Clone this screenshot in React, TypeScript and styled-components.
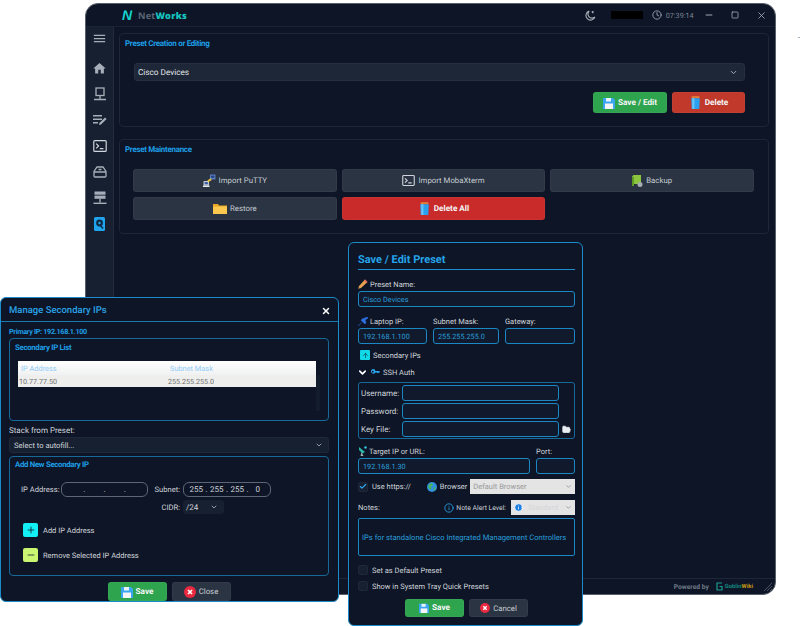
import React from 'react';
import styled, { createGlobalStyle, css } from 'styled-components';
import { MdHome, MdMenu } from 'react-icons/md';
import { ArrowUp, ChevronDown, Clock, Minus, Square, X, Info, Check, Plus, FolderOpen } from 'lucide-react';

const GlobalStyle = createGlobalStyle`
  html, body { margin: 0; padding: 0; background: #fff; overflow: hidden; }
  * { box-sizing: border-box; }
  body { font-family: Roboto, "Noto Sans", sans-serif; text-rendering: geometricPrecision; }
`;

const navy = '#0d1526';
const blue = '#1e9fe6';
const inputBorder = '#1b88c4';
const label = '#d0d4da';
const fieldText = '#2a9fdc';

const Desktop = styled('div')`
  position: relative;
  width: 800px;
  height: 626px;
  overflow: hidden;
`;

const StrayMark = styled('div')`
  position: absolute;
  left: 798px;
  top: 37px;
  width: 2px;
  height: 1px;
  background: #9fb4c0;
`;

// MAIN WINDOW
const MainWindow = styled('div')`
  position: absolute;
  left: 85px;
  top: 3px;
  width: 691px;
  height: 592px;
  display: flex;
  flex-direction: column;
  background: ${navy};
  border-radius: 13px;
  border: 1px solid #59606b;
  overflow: hidden;
`;

const TitleBar = styled('div')`
  height: 23px;
  flex: none;
  display: flex;
  align-items: center;
  padding-left: 36px;
  border-bottom: 1px solid #1a2333;
`;

const LogoN = styled('span')`
  font-family: "Liberation Sans", sans-serif;
  font-size: 14px;
  font-weight: 700;
  font-style: italic;
  color: #12d3cf;
  width: 16px;
`;

const AppName = styled('span')`
  font-family: "Noto Sans", sans-serif;
  font-size: 9.2px;
  font-weight: 700;
  color: #5b6676;
  letter-spacing: 0.2px;
  b { color: #15c5c0; }
`;

const TitleRight = styled('div')`
  margin-left: auto;
  display: flex;
  align-items: center;
  color: #a8afb9;
`;

const Redacted = styled('div')`
  width: 32px;
  height: 8px;
  background: #000;
  margin: 0 9px 0 15px;
`;

const Time = styled('span')`
  font-size: 7.2px;
  color: #7f8896;
  margin: 0 2px 0 4px;
`;

const WinControl = styled('span')`
  width: 26.5px;
  display: flex;
  justify-content: center;
  color: #c0c6cf;
`;

const Body = styled('div')`
  flex: 1;
  display: flex;
  min-height: 0;
`;

const Sidebar = styled('div')`
  width: 28px;
  flex: none;
  background: #172030;
  border-right: 1px solid #222c3c;
  padding-top: 4px;
  display: flex;
  flex-direction: column;
  align-items: center;
  gap: 12px;
  color: #a6aeb9;
`;

const SideIcon = styled('span')<{ $first?: boolean }>`
  height: 14px;
  width: 16px;
  display: flex;
  align-items: center;
  justify-content: center;
  ${p => p.$first && css`margin-bottom: 4px;`}
`;

const Content = styled('div')`
  flex: 1;
  padding: 6px 6px 0 5px;
  display: flex;
  flex-direction: column;
  gap: 12px;
`;

const Panel = styled('section')<{ $h: number }>`
  height: ${p => p.$h}px;
  border: 1px solid #1d2738;
  border-radius: 4px;
  padding-top: 5px;
`;

const PanelTitle = styled('div')`
  font-size: 8px;
  line-height: 10px;
  font-weight: 700;
  letter-spacing: -0.3px;
  color: ${blue};
  padding-left: 5px;
`;

const PresetSelect = styled('div')`
  margin: 14px 23px 0 14px;
  height: 18px;
  background: #1d2737;
  border: 1px solid #252f40;
  border-radius: 3px;
  display: flex;
  align-items: center;
  justify-content: space-between;
  padding: 1px 6px 0 3px;
  font-size: 8.2px;
  color: #e3e6ea;
`;

const ActionRow = styled('div')`
  display: flex;
  justify-content: flex-end;
  gap: 5px;
  margin: 11px 23px 0 0;
`;

const tones = {
  green: '#2ea44f',
  red: '#c0392b',
  bright: '#c92a2a',
  grey: '#2b3442',
};

const Btn = styled('div')<{ $tone: keyof typeof tones; $w?: number; $h: number }>`
  ${p => p.$w ? css`width: ${p.$w}px;` : ''}
  height: ${p => p.$h}px;
  background: ${p => tones[p.$tone]};
  border-radius: 3px;
  display: flex;
  align-items: center;
  justify-content: center;
  gap: 3px;
  font-size: ${p => p.$tone === 'grey' ? 7.8 : 8.2}px;
  font-weight: ${p => p.$tone === 'grey' ? 400 : 700};
  color: ${p => p.$tone === 'grey' ? '#c6ccd3' : '#f4f6f7'};
  border: 1px solid rgba(255, 255, 255, 0.04);
`;

const MaintGrid = styled('div')`
  display: grid;
  grid-template-columns: repeat(3, 1fr);
  gap: 5px;
  margin: 14px 14px 0 13px;
`;

const Footer = styled('div')`
  height: 16px;
  flex: none;
  border-top: 1px solid #1d2738;
  display: flex;
  align-items: center;
  justify-content: flex-end;
  padding-right: 2px;
  font-size: 6.7px;
  font-weight: 700;
  color: #6f7a88;
  gap: 2px;
`;

const WikiName = styled('span')`
  font-size: 5.8px;
  color: #13877f;
  b { color: #b58a1a; }
`;

// DIALOGS
const Dialog = styled('div')<{ $x: number; $y: number; $w: number; $h: number }>`
  position: absolute;
  left: ${p => p.$x}px;
  top: ${p => p.$y}px;
  width: ${p => p.$w}px;
  height: ${p => p.$h}px;
  background: ${navy};
  border: 1px solid #1a8ccb;
  border-radius: 6px;
  display: flex;
  flex-direction: column;
`;

const DialogHeader = styled('div')`
  height: 24px;
  flex: none;
  border-bottom: 1px solid #1a7ab0;
  display: flex;
  align-items: center;
  justify-content: space-between;
  padding: 2px 7px 0 8px;
  font-size: 9.5px;
  font-weight: 500;
  color: #2aa3e6;
  svg { color: #fff; }
`;

const DialogBody = styled('div')`
  padding: 5px 9px 0 8px;
  flex: 1;
`;

const PrimaryIp = styled('div')`
  font-size: 7.2px;
  line-height: 10px;
  font-weight: 700;
  letter-spacing: -0.3px;
  color: ${blue};
  margin-bottom: 1px;
`;

const Group = styled('div')<{ $h: number; $pt: number }>`
  height: ${p => p.$h}px;
  border: 1px solid #17699a;
  border-radius: 4px;
  padding-top: ${p => p.$pt}px;
`;

const GroupTitle = styled('div')`
  font-size: 7.8px;
  line-height: 10px;
  font-weight: 700;
  letter-spacing: -0.3px;
  color: ${blue};
  padding-left: 5px;
`;

const TableWrap = styled('div')`
  margin: 8px 8px 0 8px;
  display: grid;
  grid-template-columns: 1fr 4px;
`;

const Table = styled('div')`
  height: 50px;
`;

const TableHead = styled('div')`
  height: 14px;
  background: linear-gradient(#ffffff, #f0f1f2);
  display: grid;
  grid-template-columns: 149px 1fr;
  align-items: center;
  padding-left: 3px;
  font-size: 7.4px;
  color: #93cdf6;
`;

const TableRow = styled('div')`
  height: 12px;
  background: #eeeeec;
  display: grid;
  grid-template-columns: 149px 1fr;
  align-items: center;
  padding-left: 1px;
  font-size: 7.2px;
  color: #6f6f6f;
`;

const ScrollTrack = styled('div')`
  margin-top: 14px;
  background: #131c2c;
`;

const StackLabel = styled('div')`
  font-size: 8px;
  line-height: 10px;
  color: ${label};
  margin-top: 5px;
  margin-bottom: 1px;
`;

const AutoSelect = styled('div')`
  height: 16px;
  background: #172030;
  border: 1px solid #1e2838;
  border-radius: 3px;
  display: flex;
  align-items: center;
  justify-content: space-between;
  padding: 0 5px 0 4px;
  font-size: 7.6px;
  color: ${label};
  margin-bottom: 3px;
`;

const IpGrid = styled('div')`
  display: grid;
  grid-template-columns: 40px 87px 35px 88px;
  grid-template-rows: 15px 14px;
  row-gap: 3px;
  margin: 12px 0 0 11px;
  align-items: center;
`;

const GridLabel = styled('span')`
  font-size: 7.6px;
  color: ${label};
  text-align: right;
  padding-right: 3px;
  white-space: nowrap;
`;

const IpBox = styled('div')`
  height: 15px;
  border: 1px solid #5c6676;
  border-radius: 6px;
  display: grid;
  grid-template-columns: repeat(4, 1fr);
  align-items: center;
  padding: 0 2px;
  font-size: 8px;
  color: ${label};
  span { text-align: center; position: relative; min-height: 10px; }
  span + span::before { content: '.'; position: absolute; left: -1px; }
`;

const CidrSelect = styled('div')`
  width: 41px;
  height: 14px;
  background: #172030;
  border-radius: 3px;
  display: flex;
  align-items: center;
  justify-content: space-between;
  padding: 0 6px 0 3px;
  font-size: 8px;
  color: ${label};
`;

const ToolRow = styled('div')<{ $mt: number }>`
  display: flex;
  align-items: center;
  gap: 5px;
  margin: ${p => p.$mt}px 0 0 13px;
  font-size: 7.5px;
  color: ${label};
`;

const ToolSquare = styled('span')<{ $bg: string }>`
  width: 15px;
  height: 14px;
  background: ${p => p.$bg};
  border-radius: 2px;
  display: flex;
  align-items: center;
  justify-content: center;
  color: #123;
`;

const DialogButtons = styled('div')<{ $mt: number }>`
  display: flex;
  justify-content: center;
  gap: 5px;
  margin-top: ${p => p.$mt}px;
`;

// SAVE / EDIT FORM
const FormBody = styled('div')`
  padding: 9px 7px 0 9px;
`;

const FormTitle = styled('div')`
  font-size: 11px;
  line-height: 16px;
  height: 18px;
  font-weight: 700;
  color: #25a4ea;
  border-bottom: 1px solid #1d8fd0;
  margin-bottom: 9px;
`;

const FieldLabel = styled('div')`
  height: 10px;
  display: flex;
  align-items: center;
  gap: 2px;
  font-size: 7.5px;
  color: ${label};
  margin-bottom: 2px;
  white-space: nowrap;
`;

const Field = styled('div')`
  height: 16px;
  border: 1px solid ${inputBorder};
  border-radius: 3px;
  background: #111a2c;
  display: flex;
  align-items: center;
  padding-left: 4px;
  font-size: 7.3px;
  color: ${fieldText};
`;

const Columns = styled('div')<{ $cols: string; $mt: number }>`
  display: grid;
  grid-template-columns: ${p => p.$cols};
  column-gap: 6px;
  margin-top: ${p => p.$mt}px;
`;

const InlineRow = styled('div')<{ $mt: number; $h?: number }>`
  display: flex;
  align-items: center;
  gap: 3px;
  margin-top: ${p => p.$mt}px;
  height: ${p => p.$h ?? 12}px;
  font-size: 7.5px;
  color: ${label};
`;

const CyanTile = styled('span')`
  width: 10px;
  height: 10px;
  margin: 0 0 0 2px;
  background: #10d8e6;
  border-radius: 1px;
  display: flex;
  align-items: center;
  justify-content: center;
  color: #123;
`;

const SshChevron = styled('span')`
  display: flex;
  margin-left: -1px;
`;

const SshGroup = styled('div')`
  margin-top: 4px;
  height: 57px;
  border: 1px solid #17699a;
  border-radius: 3px;
  padding: 2px 0 0 2px;
  display: grid;
  grid-template-columns: 41px 157px 1fr;
  grid-auto-rows: 16px;
  row-gap: 2px;
  align-items: center;
  font-size: 8px;
  color: ${label};
`;

const KeyFolder = styled(FolderOpen)`
  margin-left: 3px;
  fill: #e8edf2;
  color: #e8edf2;
`;

const CheckBox = styled('span')`
  width: 10px;
  height: 10px;
  margin-right: 1px;
  border-radius: 2px;
  background: #172030;
  border: 1px solid #1e2838;
  display: flex;
  align-items: center;
  justify-content: center;
  color: #2ba7ef;
`;

const NativeSelect = styled('div')<{ $w: number }>`
  width: ${p => p.$w}px;
  height: 15px;
  background: #e4e4e4;
  display: flex;
  align-items: center;
  gap: 5px;
  padding: 0 3px;
  font-size: 7.5px;
  color: #9a9a9a;
  svg:last-child { margin-left: auto; }
`;

const FaintOption = styled('span')`
  color: #d4d6d8;
`;

const Notes = styled('div')`
  margin-top: 3px;
  height: 38px;
  border: 1px solid ${inputBorder};
  border-radius: 2px;
  display: flex;
  align-items: center;
  padding-left: 3px;
  font-size: 7.6px;
  color: ${fieldText};
  white-space: nowrap;
`;

const HttpsLabel = styled('span')`
  width: 52px;
`;

const AlertLevel = styled('span')`
  margin-left: auto;
  display: flex;
  align-items: center;
  gap: 2px;
  font-size: 6.8px;
  margin-right: 2px;
`;

const FooterGap = styled('span')<{ $w: number }>`
  width: ${p => p.$w}px;
`;

// ICONS
const Floppy = ({ s = 12 }: { s?: number }) => (
  <svg width={s} height={s} viewBox="0 0 12 12">
    <path d="M0 1h10l2 2v9H0z" fill="#3aa5f0" />
    <rect x="3" y="1" width="5" height="3.5" fill="#e8f2fb" />
    <rect x="2" y="6.5" width="8" height="5.5" fill="#f2f4f6" />
  </svg>
);

const Trash = ({ s = 13 }: { s?: number }) => (
  <svg width={s} height={s} viewBox="0 0 12 12">
    <rect x="2.5" y="0.2" width="7" height="1.8" fill="#e2813a" />
    <path d="M2 2h8l-.5 10h-7z" fill="#2ba0ee" />
    <rect x="3" y="2" width="2" height="10" fill="#69c4f7" />
  </svg>
);

const Folder = () => (
  <svg width="14" height="11" viewBox="0 0 14 11">
    <path d="M0 1h5l1 1.5h8V11H0z" fill="#e8a726" />
    <path d="M0 3.5h14V11H0z" fill="#fbc84f" />
  </svg>
);

const Putty = () => (
  <svg width="13" height="13" viewBox="0 0 12 12">
    <rect x="6.5" y="0.5" width="5" height="4.5" fill="#5e7fc4" />
    <rect x="7.5" y="1.5" width="3" height="2" fill="#23407f" />
    <rect x="0.5" y="6.5" width="5" height="4" fill="#c9ced6" />
    <rect x="1.5" y="7.5" width="3" height="2" fill="#3559a8" />
    <path d="M4 6l3-2 1 1.5-3 2z" fill="#e8c33d" />
    <rect x="0" y="10.5" width="6" height="1.5" fill="#e5e7ea" />
  </svg>
);

const TermIcon = ({ s = 13 }: { s?: number }) => (
  <svg width={s} height={s} viewBox="0 0 14 14" fill="none" stroke="#cfd5dc" strokeWidth="1.2">
    <rect x="0.8" y="1.6" width="12.4" height="10.8" rx="1" />
    <path d="M3.2 4.6 5.6 7 3.2 9.4M6.8 9.6h3.6" />
  </svg>
);

const BackupIcon = () => (
  <svg width="11" height="12" viewBox="0 0 11 12">
    <path d="M0 1.5 1.5 0H9v9H0z" fill="#8cc63f" />
    <rect x="0" y="2" width="2" height="9" fill="#5e9c23" />
    <circle cx="8" cy="9.5" r="2.5" fill="#a8adb3" />
  </svg>
);

const RedCross = ({ s = 12 }: { s?: number }) => (
  <svg width={s} height={s} viewBox="0 0 12 12">
    <circle cx="6" cy="6" r="6" fill="#e8293f" />
    <path d="M4 4l4 4M8 4l-4 4" stroke="#fff" strokeWidth="1.7" />
  </svg>
);

const Pencil = () => (
  <svg width="10" height="10" viewBox="0 0 10 10">
    <path d="M0 10l1-3 6-6.5 2.5 2.5L3 9z" fill="#e8a24e" />
    <path d="M7 .5 9.5 3 8.4 4.1 5.9 1.6z" fill="#e0655a" />
    <path d="M0 10l.6-2L2 9.4z" fill="#444" />
  </svg>
);

const Pin = () => (
  <svg width="10" height="9" viewBox="0 0 10 9">
    <path d="M0 9l3.5-3.2M3 3.2 6.8 7 8 5.5 7 3l3-2-1-1-3 1.4L4.6 1.8z" fill="#2f6fe0" stroke="#2f6fe0" strokeWidth=".6" />
  </svg>
);

const KeyIcon = () => (
  <svg width="9" height="5.4" viewBox="0 0 10 6" fill="#2ba7ef">
    <path d="M2.6 0a2.6 2.6 0 1 0 2.3 3.8H6.5l.7.8.8-.8.7.8L10 3.3 9 2.3H4.9A2.6 2.6 0 0 0 2.6 0zM2 2a1 1 0 1 1 0 2 1 1 0 0 1 0-2z" />
  </svg>
);

const Satellite = () => (
  <svg width="9" height="10" viewBox="0 0 9 10">
    <path d="M1 1l6 5-2.5 1.5L1 4z" fill="#27b8a8" />
    <path d="M3.5 6 2.5 10h3z" fill="#9aa" />
    <circle cx="7.5" cy="1.5" r="1.2" fill="#37c9e0" />
  </svg>
);

const Globe = () => (
  <svg width="10" height="10" viewBox="0 0 10 10">
    <circle cx="5" cy="5" r="5" fill="#2f8fe0" />
    <path d="M2 2.5 5 1l1 2-2 1.5.5 2L3 8 1.2 5z" fill="#4db25c" />
    <path d="M7 5l2 .5L8 8l-1.5.5z" fill="#4db25c" />
  </svg>
);

const MonitorNet = () => (
  <svg width="14" height="14" viewBox="0 0 14 14" fill="none" stroke="currentColor" strokeWidth="1.3">
    <rect x="3" y="1" width="8" height="7.5" />
    <path d="M7 8.5v3.5M1 12.5h12" />
  </svg>
);

const ListEdit = () => (
  <svg width="14" height="12" viewBox="0 0 14 12" fill="currentColor">
    <rect x="0" y="1" width="9" height="1.5" />
    <rect x="0" y="4.5" width="9" height="1.5" />
    <rect x="0" y="8" width="5" height="1.5" />
    <path d="M6 11l.4-2L12 3.5l1.6 1.6L8 10.6z" />
  </svg>
);

const HddBox = () => (
  <svg width="14" height="12" viewBox="0 0 14 12" fill="none" stroke="currentColor" strokeWidth="1.3">
    <path d="M4 1h6l3 4.5V10a1 1 0 0 1-1 1H2a1 1 0 0 1-1-1V5.5z" />
    <path d="M1 6h12" />
    <path d="M5.5 3.5h3" />
  </svg>
);

const ServerNet = () => (
  <svg width="14" height="14" viewBox="0 0 14 14" fill="currentColor">
    <rect x="1.5" y="0.5" width="11" height="3.2" />
    <rect x="1.5" y="4.6" width="11" height="3.2" />
    <rect x="6.3" y="8" width="1.4" height="3.6" />
    <rect x="0.5" y="11.6" width="13" height="1.4" />
  </svg>
);

const ActiveDisk = () => (
  <svg width="11" height="14" viewBox="0 0 11 14">
    <rect width="11" height="14" rx="1.5" fill="#1fa5ee" />
    <circle cx="5.5" cy="6" r="3.4" fill="#0f2a45" />
    <circle cx="5.5" cy="6" r="1.2" fill="#1fa5ee" />
    <path d="M6 8l3 3.5" stroke="#0f2a45" strokeWidth="1.4" />
  </svg>
);

const MoonClock = () => (
  <svg width="11" height="11" viewBox="0 0 12 12" fill="none" stroke="currentColor" strokeWidth="1.2">
    <path d="M4.6 1.2a5 5 0 1 0 6.2 6.4A4.4 4.4 0 0 1 4.6 1.2z" />
    <path d="M8.4 1v2.6M7.2 2.2h2.4" />
  </svg>
);

const Grip = () => (
  <svg width="10" height="10" viewBox="0 0 10 10" stroke="#47505e" strokeWidth="1">
    <path d="M9 1 1 9M9 4 4 9M9 7 7 9" />
  </svg>
);

const WikiLogo = () => (
  <svg width="7" height="9" viewBox="0 0 7 9" fill="none" stroke="#1c9c8f" strokeWidth="1.2">
    <path d="M6 1H1v7h5V4.5H3.5" />
  </svg>
);

const Secondary = () => (
  <Dialog $x={0} $y={297} $w={339} $h={305}>
    <DialogHeader>
      Manage Secondary IPs
      <X size={10} strokeWidth={3.5} />
    </DialogHeader>
    <DialogBody>
      <PrimaryIp>Primary IP: 192.168.1.100</PrimaryIp>
      <Group $h={83} $pt={4}>
        <GroupTitle>Secondary IP List</GroupTitle>
        <TableWrap>
          <Table>
            <TableHead><span>IP Address</span><span>Subnet Mask</span></TableHead>
            <TableRow><span>10.77.77.50</span><span>255.255.255.0</span></TableRow>
          </Table>
          <ScrollTrack />
        </TableWrap>
      </Group>
      <StackLabel>Stack from Preset:</StackLabel>
      <AutoSelect>
        Select to autofill...
        <ChevronDown size={8} strokeWidth={2.5} color="#aab1bb" />
      </AutoSelect>
      <Group $h={120} $pt={3}>
        <GroupTitle>Add New Secondary IP</GroupTitle>
        <IpGrid>
          <GridLabel>IP Address:</GridLabel>
          <IpBox><span /><span /><span /><span /></IpBox>
          <GridLabel>Subnet:</GridLabel>
          <IpBox><span>255</span><span>255</span><span>255</span><span>0</span></IpBox>
          <span />
          <span />
          <GridLabel>CIDR:</GridLabel>
          <CidrSelect>/24<ChevronDown size={8} strokeWidth={2.5} color="#aab1bb" /></CidrSelect>
        </IpGrid>
        <ToolRow $mt={9}>
          <ToolSquare $bg="#12f0f5"><Plus size={10} strokeWidth={2} /></ToolSquare>
          Add IP Address
        </ToolRow>
        <ToolRow $mt={11}>
          <ToolSquare $bg="#c9f571"><Minus size={10} strokeWidth={2} /></ToolSquare>
          Remove Selected IP Address
        </ToolRow>
      </Group>
      <DialogButtons $mt={6}>
        <Btn $tone="green" $w={59} $h={19}><Floppy /> Save</Btn>
        <Btn $tone="grey" $w={59} $h={19}><RedCross /> Close</Btn>
      </DialogButtons>
    </DialogBody>
  </Dialog>
);

const SavePreset = () => (
  <Dialog $x={348} $y={242} $w={235} $h={384}>
    <FormBody>
      <FormTitle>Save / Edit Preset</FormTitle>
      <FieldLabel><Pencil /> Preset Name:</FieldLabel>
      <Field>Cisco Devices</Field>
      <Columns $cols="69px 66px 70px" $mt={9}>
        <div><FieldLabel><Pin /> Laptop IP:</FieldLabel><Field>192.168.1.100</Field></div>
        <div><FieldLabel>Subnet Mask:</FieldLabel><Field>255.255.255.0</Field></div>
        <div><FieldLabel>Gateway:</FieldLabel><Field /></div>
      </Columns>
      <InlineRow $mt={5}><CyanTile><ArrowUp size={7} strokeWidth={2} /></CyanTile> Secondary IPs</InlineRow>
      <InlineRow $mt={5}>
        <SshChevron><ChevronDown size={11} strokeWidth={3.5} color="#fff" /></SshChevron>
        <KeyIcon /> SSH Auth
      </InlineRow>
      <SshGroup>
        <span>Username:</span><Field /><span />
        <span>Password:</span><Field /><span />
        <span>Key File:</span><Field />
        <KeyFolder size={9} />
      </SshGroup>
      <Columns $cols="172px 39px" $mt={7}>
        <div><FieldLabel><Satellite /> Target IP or URL:</FieldLabel><Field>192.168.1.30</Field></div>
        <div><FieldLabel>Port:</FieldLabel><Field /></div>
      </Columns>
      <InlineRow $mt={5} $h={15}>
        <CheckBox><Check size={9} strokeWidth={3.5} /></CheckBox>
        <HttpsLabel>Use https://</HttpsLabel>
        <Globe /> Browser
        <NativeSelect $w={105}>
          Default Browser
          <ChevronDown size={7} strokeWidth={2.5} color="#888" />
        </NativeSelect>
      </InlineRow>
      <InlineRow $mt={6} $h={15}>
        Notes:
        <AlertLevel><Info size={10} color="#2ba7ef" /> Note Alert Level:</AlertLevel>
        <NativeSelect $w={64}>
          <Info size={9} fill="#1c7fe0" color="#fff" />
          <FaintOption>Standard</FaintOption>
          <ChevronDown size={7} strokeWidth={2.5} color="#888" />
        </NativeSelect>
      </InlineRow>
      <Notes>IPs for standalone Cisco Integrated Management Controllers</Notes>
      <InlineRow $mt={8}><CheckBox /> Set as Default Preset</InlineRow>
      <InlineRow $mt={4}><CheckBox /> Show in System Tray Quick Presets</InlineRow>
      <DialogButtons $mt={7}>
        <Btn $tone="green" $w={59} $h={18}><Floppy s={10} /> Save</Btn>
        <Btn $tone="grey" $w={59} $h={18}><RedCross s={10} /> Cancel</Btn>
      </DialogButtons>
    </FormBody>
  </Dialog>
);

export default function App() {
  return (
    <Desktop>
      <GlobalStyle />
      <StrayMark />
      <MainWindow>
        <TitleBar>
          <LogoN>N</LogoN>
          <AppName>Net<b>Works</b></AppName>
          <TitleRight>
            <MoonClock />
            <Redacted />
            <Clock size={10} />
            <Time>07:39:14</Time>
            <WinControl><Minus size={10} strokeWidth={2} /></WinControl>
            <WinControl><Square size={8} strokeWidth={2} /></WinControl>
            <WinControl><X size={11} strokeWidth={1.6} /></WinControl>
          </TitleRight>
        </TitleBar>
        <Body>
          <Sidebar>
            <SideIcon $first><MdMenu size={15} /></SideIcon>
            <SideIcon><MdHome size={15} /></SideIcon>
            <SideIcon><MonitorNet /></SideIcon>
            <SideIcon><ListEdit /></SideIcon>
            <SideIcon><TermIcon s={14} /></SideIcon>
            <SideIcon><HddBox /></SideIcon>
            <SideIcon><ServerNet /></SideIcon>
            <SideIcon><ActiveDisk /></SideIcon>
          </Sidebar>
          <Content>
            <Panel $h={94}>
              <PanelTitle>Preset Creation or Editing</PanelTitle>
              <PresetSelect>
                Cisco Devices
                <ChevronDown size={9} strokeWidth={2.5} color="#aab1bb" />
              </PresetSelect>
              <ActionRow>
                <Btn $tone="green" $w={74} $h={21}><Floppy /> Save / Edit</Btn>
                <Btn $tone="red" $w={73} $h={21}><Trash /> Delete</Btn>
              </ActionRow>
            </Panel>
            <Panel $h={95}>
              <PanelTitle>Preset Maintenance</PanelTitle>
              <MaintGrid>
                <Btn $tone="grey" $h={23}><Putty /> Import PuTTY</Btn>
                <Btn $tone="grey" $h={23}><TermIcon /> Import MobaXterm</Btn>
                <Btn $tone="grey" $h={23}><BackupIcon /> Backup</Btn>
                <Btn $tone="grey" $h={23}><Folder /> Restore</Btn>
                <Btn $tone="bright" $h={23}><Trash /> Delete All</Btn>
              </MaintGrid>
            </Panel>
          </Content>
        </Body>
        <Footer>
          Powered by
          <FooterGap $w={3} />
          <WikiLogo />
          <WikiName>Goblin<b>Wiki</b></WikiName>
          <FooterGap $w={6} />
          <Grip />
        </Footer>
      </MainWindow>
      <Secondary />
      <SavePreset />
    </Desktop>
  );
}
